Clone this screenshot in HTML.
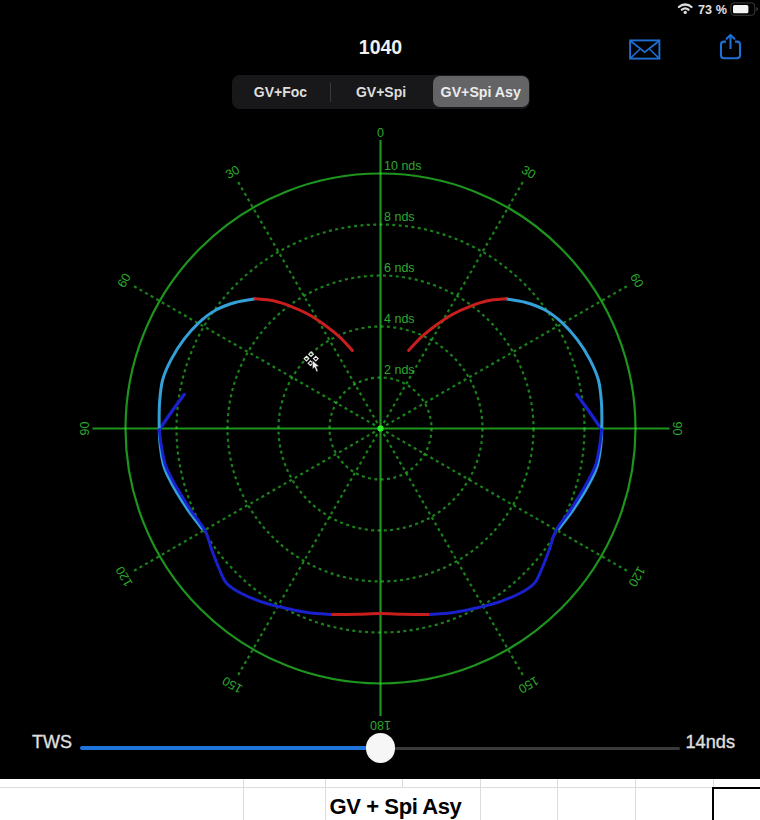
<!DOCTYPE html>
<html><head><meta charset="utf-8">
<style>
html,body{margin:0;padding:0;}
body{width:760px;height:820px;overflow:hidden;position:relative;background:#fff;font-family:"Liberation Sans",sans-serif;}
#dark{position:absolute;left:0;top:0;width:760px;height:779px;background:#000;}
.t{position:absolute;white-space:nowrap;}
</style></head><body>
<div id="dark"></div>
<!-- status bar -->
<svg width="760" height="30" style="position:absolute;left:0;top:0">
  <g fill="none" stroke="#dcdcdc" stroke-width="2.3" stroke-linecap="round">
    <path d="M678.9,7 A9.2,9.2 0 0 1 691.5,7"/>
    <path d="M681.9,9.7 A5.2,5.2 0 0 1 688.5,9.7"/>
  </g>
  <circle cx="685.2" cy="12.4" r="1.7" fill="#dcdcdc"/>
  <rect x="730.8" y="2.9" width="24" height="12.4" rx="3.2" fill="none" stroke="#3c3c3c" stroke-width="1"/>
  <rect x="733" y="4.9" width="15.4" height="8.4" rx="1.6" fill="#f4f4f4"/>
  <path d="M756.3,7.3 a1.8,1.8 0 0 1 0,3.6 z" fill="#3c3c3c"/>
</svg>
<div class="t" style="left:698px;top:2.5px;font-size:12.6px;font-weight:bold;color:#e0e0e0;letter-spacing:0.1px">73 %</div>
<!-- title -->
<div class="t" style="left:0;width:761px;text-align:center;top:35.5px;font-size:19.5px;font-weight:bold;color:#f0f0f0">1040</div>
<!-- mail icon -->
<svg width="760" height="70" style="position:absolute;left:0;top:0">
  <rect x="630.1" y="40.4" width="29.3" height="18.2" fill="none" stroke="#1f6fd4" stroke-width="1.9"/>
  <path d="M630.6,41 L644.7,52.2 L658.9,41" fill="none" stroke="#1f6fd4" stroke-width="1.8"/>
  <path d="M630.6,58.1 L639.8,49.3 M658.9,58.1 L649.6,49.3" fill="none" stroke="#1f6fd4" stroke-width="1.5"/>
  <path d="M726,41.6 L724,41.6 Q721,41.6 721,44.6 L721,55.3 Q721,58.3 724,58.3 L737,58.3 Q740,58.3 740,55.3 L740,44.6 Q740,41.6 737,41.6 L735,41.6" fill="none" stroke="#1f6fd4" stroke-width="2.1"/>
  <path d="M730.5,36 L730.5,49" fill="none" stroke="#1f6fd4" stroke-width="2.1"/>
  <path d="M726.6,38.8 L730.5,34.9 L734.4,38.8" fill="none" stroke="#1f6fd4" stroke-width="2.1" stroke-linecap="round" stroke-linejoin="round"/>
</svg>
<!-- segmented control -->
<div style="position:absolute;left:231.5px;top:74.5px;width:298.5px;height:34px;border-radius:8px;background:#18181a"></div>
<div style="position:absolute;left:433px;top:76px;width:95.5px;height:31px;border-radius:7px;background:#646467"></div>
<div style="position:absolute;left:329.5px;top:82.5px;width:1.2px;height:19px;background:#3a3a3c"></div>
<div class="t" style="left:231px;width:99px;text-align:center;top:83.5px;font-size:14px;font-weight:bold;color:#dedede">GV+Foc</div>
<div class="t" style="left:331px;width:100px;text-align:center;top:83.5px;font-size:14px;font-weight:bold;color:#dedede">GV+Spi</div>
<div class="t" style="left:433px;width:95.5px;text-align:center;top:83.5px;font-size:14.2px;font-weight:bold;color:#ececec">GV+Spi Asy</div>
<svg width="760" height="820" viewBox="0 0 760 820" style="position:absolute;left:0;top:0">
<g>
<circle cx="380.5" cy="428.5" r="51.0" fill="none" stroke="rgba(50,235,50,0.55)" stroke-width="2.2" stroke-dasharray="3 3.4"/>
<circle cx="380.5" cy="428.5" r="102.0" fill="none" stroke="rgba(50,235,50,0.55)" stroke-width="2.2" stroke-dasharray="3 3.4"/>
<circle cx="380.5" cy="428.5" r="153.0" fill="none" stroke="rgba(50,235,50,0.55)" stroke-width="2.2" stroke-dasharray="3 3.4"/>
<circle cx="380.5" cy="428.5" r="204.0" fill="none" stroke="rgba(50,235,50,0.55)" stroke-width="2.2" stroke-dasharray="3 3.4"/>
<line x1="380.5" y1="428.5" x2="524.0" y2="180.0" stroke="rgba(50,235,50,0.55)" stroke-width="2.2" stroke-dasharray="3 3.4"/>
<line x1="380.5" y1="428.5" x2="629.0" y2="285.0" stroke="rgba(50,235,50,0.55)" stroke-width="2.2" stroke-dasharray="3 3.4"/>
<line x1="380.5" y1="428.5" x2="629.0" y2="572.0" stroke="rgba(50,235,50,0.55)" stroke-width="2.2" stroke-dasharray="3 3.4"/>
<line x1="380.5" y1="428.5" x2="524.0" y2="677.0" stroke="rgba(50,235,50,0.55)" stroke-width="2.2" stroke-dasharray="3 3.4"/>
<line x1="380.5" y1="428.5" x2="237.0" y2="677.0" stroke="rgba(50,235,50,0.55)" stroke-width="2.2" stroke-dasharray="3 3.4"/>
<line x1="380.5" y1="428.5" x2="132.0" y2="572.0" stroke="rgba(50,235,50,0.55)" stroke-width="2.2" stroke-dasharray="3 3.4"/>
<line x1="380.5" y1="428.5" x2="132.0" y2="285.0" stroke="rgba(50,235,50,0.55)" stroke-width="2.2" stroke-dasharray="3 3.4"/>
<line x1="380.5" y1="428.5" x2="237.0" y2="180.0" stroke="rgba(50,235,50,0.55)" stroke-width="2.2" stroke-dasharray="3 3.4"/>
<circle cx="380.5" cy="428.5" r="255.0" fill="none" stroke="rgba(50,255,50,0.58)" stroke-width="2.2"/>
<line x1="380.5" y1="140" x2="380.5" y2="716" stroke="rgba(50,255,50,0.58)" stroke-width="2.2"/>
<line x1="92.5" y1="428.5" x2="669.5" y2="428.5" stroke="rgba(50,255,50,0.58)" stroke-width="2.2"/>
<text x="0" y="0" transform="translate(380.5,132.5) rotate(0)" text-anchor="middle" dominant-baseline="central" font-family="Liberation Sans" font-size="12.5" fill="#2ea82e">0</text>
<text x="0" y="0" transform="translate(528.5,172.2) rotate(30)" text-anchor="middle" dominant-baseline="central" font-family="Liberation Sans" font-size="12.5" fill="#2ea82e">30</text>
<text x="0" y="0" transform="translate(636.8,280.5) rotate(60)" text-anchor="middle" dominant-baseline="central" font-family="Liberation Sans" font-size="12.5" fill="#2ea82e">60</text>
<text x="0" y="0" transform="translate(676.5,428.5) rotate(90)" text-anchor="middle" dominant-baseline="central" font-family="Liberation Sans" font-size="12.5" fill="#2ea82e">90</text>
<text x="0" y="0" transform="translate(636.8,576.5) rotate(120)" text-anchor="middle" dominant-baseline="central" font-family="Liberation Sans" font-size="12.5" fill="#2ea82e">120</text>
<text x="0" y="0" transform="translate(528.5,684.8) rotate(150)" text-anchor="middle" dominant-baseline="central" font-family="Liberation Sans" font-size="12.5" fill="#2ea82e">150</text>
<text x="0" y="0" transform="translate(380.5,724.5) rotate(180)" text-anchor="middle" dominant-baseline="central" font-family="Liberation Sans" font-size="12.5" fill="#2ea82e">180</text>
<text x="0" y="0" transform="translate(232.5,172.2) rotate(-30)" text-anchor="middle" dominant-baseline="central" font-family="Liberation Sans" font-size="12.5" fill="#2ea82e">30</text>
<text x="0" y="0" transform="translate(124.2,280.5) rotate(-60)" text-anchor="middle" dominant-baseline="central" font-family="Liberation Sans" font-size="12.5" fill="#2ea82e">60</text>
<text x="0" y="0" transform="translate(84.5,428.5) rotate(-90)" text-anchor="middle" dominant-baseline="central" font-family="Liberation Sans" font-size="12.5" fill="#2ea82e">90</text>
<text x="0" y="0" transform="translate(124.2,576.5) rotate(-120)" text-anchor="middle" dominant-baseline="central" font-family="Liberation Sans" font-size="12.5" fill="#2ea82e">120</text>
<text x="0" y="0" transform="translate(232.5,684.8) rotate(-150)" text-anchor="middle" dominant-baseline="central" font-family="Liberation Sans" font-size="12.5" fill="#2ea82e">150</text>
<text x="384" y="374.0" font-family="Liberation Sans" font-size="12.5" fill="#2ea82e">2 nds</text>
<text x="384" y="323.0" font-family="Liberation Sans" font-size="12.5" fill="#2ea82e">4 nds</text>
<text x="384" y="272.0" font-family="Liberation Sans" font-size="12.5" fill="#2ea82e">6 nds</text>
<text x="384" y="221.0" font-family="Liberation Sans" font-size="12.5" fill="#2ea82e">8 nds</text>
<text x="384" y="170.0" font-family="Liberation Sans" font-size="12.5" fill="#2ea82e">10 nds</text>
<path d="M184.2,394.4 C182.2,397.1 176.5,404.8 172.5,410.5 C168.5,416.2 162.2,425.4 160.2,428.4" fill="none" stroke="#1a20cc" stroke-width="3.3" stroke-linecap="round"/>
<path d="M576.8,394.4 C578.8,397.1 584.5,404.8 588.5,410.5 C592.5,416.2 598.8,425.4 600.8,428.4" fill="none" stroke="#1a20cc" stroke-width="3.3" stroke-linecap="round"/>
<path d="M255.3,298.8 C252.1,299.4 242.6,300.3 236.0,302.2 C229.4,304.1 221.7,306.8 215.5,310.2 C209.3,313.6 204.0,317.9 198.7,322.8 C193.4,327.7 188.5,333.3 183.9,339.4 C179.3,345.5 174.7,352.8 171.1,359.6 C167.5,366.4 164.5,372.9 162.6,380.0 C160.7,387.1 160.2,394.0 159.6,402.1 C159.0,410.2 159.1,421.2 159.2,428.4 C159.3,435.6 159.5,439.5 160.2,445.5 C160.9,451.5 161.9,459.0 163.4,464.5 C164.9,470.0 166.8,474.0 169.1,478.7 C171.4,483.4 173.8,487.6 177.0,492.9 C180.2,498.2 183.9,504.2 188.2,510.3 C192.5,516.5 200.4,526.5 202.8,529.8" fill="none" stroke="#34a0d8" stroke-width="3"/>
<path d="M505.7,298.8 C508.9,299.4 518.4,300.3 525.0,302.2 C531.6,304.1 539.3,306.8 545.5,310.2 C551.7,313.6 557.0,317.9 562.3,322.8 C567.6,327.7 572.5,333.3 577.1,339.4 C581.7,345.5 586.4,352.8 589.9,359.6 C593.4,366.4 596.5,372.9 598.4,380.0 C600.3,387.1 600.8,394.0 601.4,402.1 C602.0,410.2 601.9,421.2 601.8,428.4 C601.7,435.6 601.5,439.5 600.8,445.5 C600.1,451.5 599.1,459.0 597.6,464.5 C596.1,470.0 594.2,474.0 591.9,478.7 C589.6,483.4 587.2,487.6 584.0,492.9 C580.8,498.2 577.1,504.2 572.8,510.3 C568.5,516.5 560.6,526.5 558.2,529.8" fill="none" stroke="#34a0d8" stroke-width="3"/>
<path d="M159.2,428.4 C159.5,431.2 160.3,439.5 161.3,445.5 C162.3,451.5 163.4,459.0 165.2,464.5 C166.9,470.0 169.4,474.0 171.8,478.7 C174.2,483.4 176.6,487.6 179.8,492.9 C183.0,498.2 186.6,504.0 190.8,510.3 C195.0,516.6 201.5,523.9 205.0,530.5 C208.5,537.1 209.4,543.5 211.8,550.0 C214.2,556.5 217.0,564.0 219.5,569.5 C222.0,575.0 223.1,579.3 226.6,583.2 C230.1,587.1 234.9,590.0 240.5,593.0 C246.1,596.0 253.0,598.9 260.0,601.3 C267.0,603.7 274.6,605.6 282.5,607.5 C290.4,609.4 299.4,611.3 307.5,612.5 C315.6,613.7 327.3,614.2 331.3,614.5" fill="none" stroke="#1a20cc" stroke-width="3"/>
<path d="M601.8,428.4 C601.4,431.2 600.7,439.5 599.7,445.5 C598.7,451.5 597.5,459.0 595.8,464.5 C594.0,470.0 591.6,474.0 589.2,478.7 C586.8,483.4 584.4,487.6 581.2,492.9 C578.0,498.2 574.4,504.0 570.2,510.3 C566.0,516.6 559.5,523.9 556.0,530.5 C552.5,537.1 551.6,543.5 549.2,550.0 C546.8,556.5 544.0,564.0 541.5,569.5 C539.0,575.0 537.9,579.3 534.4,583.2 C530.9,587.1 526.1,590.0 520.5,593.0 C514.9,596.0 508.0,598.9 501.0,601.3 C494.0,603.7 486.4,605.6 478.5,607.5 C470.6,609.4 461.6,611.3 453.5,612.5 C445.4,613.7 433.7,614.2 429.7,614.5" fill="none" stroke="#1a20cc" stroke-width="3"/>
<path d="M352.4,350.5 C350.3,348.3 344.4,341.4 339.7,337.1 C335.0,332.8 329.2,328.3 324.0,324.5 C318.8,320.7 313.7,317.2 308.2,314.2 C302.7,311.2 296.6,308.5 290.8,306.3 C285.0,304.1 279.3,302.1 273.4,300.8 C267.5,299.6 258.3,299.1 255.3,298.8" fill="none" stroke="#c81e1e" stroke-width="3" stroke-linecap="round"/>
<path d="M408.6,350.5 C410.7,348.3 416.6,341.4 421.3,337.1 C426.0,332.8 431.8,328.3 437.0,324.5 C442.2,320.7 447.3,317.2 452.8,314.2 C458.3,311.2 464.4,308.5 470.2,306.3 C476.0,304.1 481.7,302.1 487.6,300.8 C493.5,299.6 502.7,299.1 505.7,298.8" fill="none" stroke="#c81e1e" stroke-width="3" stroke-linecap="round"/>
<path d="M331.3,614.5 C335.7,614.5 349.3,614.4 357.5,614.3 C365.7,614.1 372.8,613.6 380.5,613.6 C388.2,613.6 395.3,614.1 403.5,614.3 C411.7,614.4 425.3,614.5 429.7,614.5" fill="none" stroke="#c81e1e" stroke-width="3"/>
<circle cx="380.5" cy="428.5" r="3" fill="#2af02a"/>
</g>
<path d="M311.1,351.9 l2.3,2.3 l-2.3,2.3 l-2.3,-2.3 z" fill="none" stroke="#e8e8e8" stroke-width="1.2"/><path d="M306.5,356.3 l2.3,2.3 l-2.3,2.3 l-2.3,-2.3 z" fill="none" stroke="#e8e8e8" stroke-width="1.2"/><path d="M315.8,356.3 l2.3,2.3 l-2.3,2.3 l-2.3,-2.3 z" fill="none" stroke="#e8e8e8" stroke-width="1.2"/><path d="M310.5,360.9 l2.3,2.3 l-2.3,2.3 l-2.3,-2.3 z" fill="none" stroke="#e8e8e8" stroke-width="1.2"/>
<path d="M312.5,360.5 L312.5,369 L314.6,367.2 L316.5,371.8 L318,371 L316.2,366.6 L319,366.3 Z" fill="#f4f4f4" stroke="#222" stroke-width="0.5"/>
</svg>
<!-- slider -->
<div class="t" style="left:32px;top:731.5px;font-size:18px;color:#e0e0e0;-webkit-text-stroke:0.3px #e0e0e0">TWS</div>
<div style="position:absolute;left:80px;top:746px;width:300px;height:4px;border-radius:2px;background:#1f74dc"></div>
<div style="position:absolute;left:381px;top:746.5px;width:299px;height:3px;border-radius:1.5px;background:#3a3a3c"></div>
<div style="position:absolute;left:365.5px;top:733px;width:29.5px;height:29.5px;border-radius:50%;background:#f6f6f6"></div>
<div class="t" style="left:685.5px;top:731.5px;font-size:18.2px;color:#e0e0e0;-webkit-text-stroke:0.3px #e0e0e0">14nds</div>
<!-- spreadsheet -->
<div style="position:absolute;left:0;top:787px;width:760px;height:1px;background:#dcdcdc"></div>
<div style="position:absolute;left:243px;top:779px;width:1px;height:41px;background:#dcdcdc"></div>
<div style="position:absolute;left:325px;top:779px;width:1px;height:41px;background:#dcdcdc"></div>
<div style="position:absolute;left:402px;top:779px;width:1px;height:8px;background:#dcdcdc"></div>
<div style="position:absolute;left:480px;top:779px;width:1px;height:41px;background:#dcdcdc"></div>
<div style="position:absolute;left:557px;top:779px;width:1px;height:41px;background:#dcdcdc"></div>
<div style="position:absolute;left:635px;top:779px;width:1px;height:41px;background:#dcdcdc"></div>
<div style="position:absolute;left:713px;top:779px;width:1px;height:8px;background:#dcdcdc"></div>
<div style="position:absolute;left:712px;top:787px;width:48px;height:33px;box-sizing:border-box;border-left:2px solid #000;border-top:2px solid #000"></div>
<div class="t" style="left:329.5px;top:793.5px;font-size:22px;font-weight:bold;color:#000;letter-spacing:-0.4px">GV + Spi Asy</div>
</body></html>
